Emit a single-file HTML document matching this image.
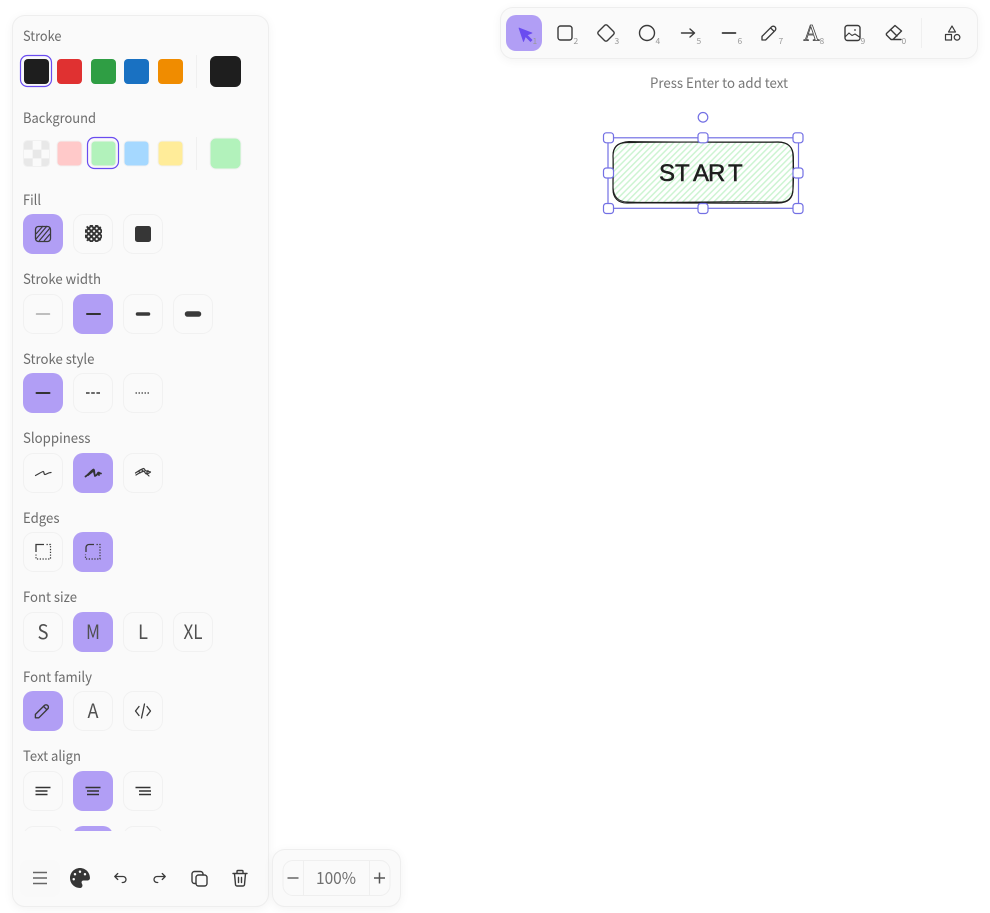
<!DOCTYPE html>
<html>
<head>
<meta charset="utf-8">
<style>
html,body{margin:0;padding:0;background:#fff;width:990px;height:913px;overflow:hidden}
.p{position:absolute;box-sizing:border-box;background:#fafafa;border:1px solid #eee;box-shadow:0 2px 10px rgba(0,0,0,.05)}
svg{position:absolute;left:0;top:0}
text{font-family:"Noto Sans CJK JP","Liberation Sans",sans-serif}
.l{font-size:14px;fill:#6c6c6c}
.b{fill:#fafafa;stroke:#f1f1f1;stroke-width:1}
.a{fill:#b19ef5}
.s{fill:none;stroke:#3a3a3a;stroke-width:1.4;stroke-linecap:round;stroke-linejoin:round}
.n{font-size:8.5px;fill:#999}
.f{font-size:20px;fill:#505050;text-anchor:middle}
.sw{stroke:#f1f1f1;stroke-width:1}
.h{fill:#fff;stroke:#7370e4;stroke-width:1.2}
</style>
</head>
<body>
<div class="p" style="left:12px;top:15px;width:257px;height:892px;border-radius:13px"></div>
<div class="p" style="left:272px;top:849px;width:129px;height:58px;border-radius:13px"></div>
<div class="p" style="left:500px;top:7px;width:478px;height:52px;border-radius:13px"></div>
<svg width="990" height="913" viewBox="0 0 990 913" xmlns="http://www.w3.org/2000/svg">
<defs>
<pattern id="hach" width="4.4" height="4.4" patternUnits="userSpaceOnUse" patternTransform="rotate(-45)">
<rect width="4.4" height="4.4" fill="#fff"/><rect width="4.4" height="1.5" fill="#cdf4d2"/>
</pattern>
<pattern id="chk" width="17.4" height="17.4" patternUnits="userSpaceOnUse" x="24" y="141">
<rect width="17.4" height="17.4" fill="#fafafa"/>
<rect width="8.7" height="8.7" fill="#e8e8e8"/><rect x="8.7" y="8.7" width="8.7" height="8.7" fill="#e8e8e8"/>
</pattern>
<pattern id="dots" width="3.8" height="3.8" patternUnits="userSpaceOnUse" patternTransform="rotate(45)">
<rect width="3.8" height="3.8" fill="#333"/><circle cx="1.9" cy="1.9" r="1.1" fill="#fafafa"/>
</pattern>
<clipPath id="clipRow"><rect x="13" y="800" width="255" height="31"/></clipPath>
</defs>

<!-- Stroke -->
<text class="l" x="23" y="41" textLength="38.500" lengthAdjust="spacingAndGlyphs">Stroke</text>
<rect x="20.500" y="55.500" width="31" height="31" rx="7" fill="none" stroke="#6a4cf0" stroke-width="1.200"/>
<rect x="24" y="59" width="25" height="25" rx="4" fill="#1e1e1e"/>
<rect x="57" y="59" width="25" height="25" rx="4" fill="#e03131"/>
<rect x="91" y="59" width="25" height="25" rx="4" fill="#2f9e44"/>
<rect x="124" y="59" width="25" height="25" rx="4" fill="#1971c2"/>
<rect x="158" y="59" width="25" height="25" rx="4" fill="#f08c00"/>
<rect x="196" y="55" width="1" height="33" fill="#f0f0f0"/>
<rect x="210" y="56" width="31" height="31" rx="6" fill="#1e1e1e"/>

<!-- Background -->
<text class="l" x="23" y="123" textLength="73" lengthAdjust="spacingAndGlyphs">Background</text>
<rect x="23.500" y="140.500" width="26" height="26" rx="4" fill="url(#chk)" stroke="#f1f1f1"/>
<rect x="57" y="141" width="25" height="25" rx="4" fill="#ffc9c9" class="sw"/>
<rect x="87.500" y="137.500" width="31" height="31" rx="7" fill="none" stroke="#6a4cf0" stroke-width="1.200"/>
<rect x="91" y="141" width="25" height="25" rx="4" fill="#b2f2bb" class="sw"/>
<rect x="124" y="141" width="25" height="25" rx="4" fill="#a5d8ff" class="sw"/>
<rect x="158" y="141" width="25" height="25" rx="4" fill="#ffec99" class="sw"/>
<rect x="196" y="137" width="1" height="33" fill="#f0f0f0"/>
<rect x="210" y="138" width="31" height="31" rx="6" fill="#b2f2bb" class="sw"/>

<!-- Fill -->
<text class="l" x="23" y="205" textLength="18" lengthAdjust="spacingAndGlyphs">Fill</text>
<rect class="a" x="23" y="214" width="40" height="40" rx="10"/>
<rect class="b" x="73.500" y="214.500" width="39" height="39" rx="10"/>
<rect class="b" x="123.500" y="214.500" width="39" height="39" rx="10"/>
<rect x="35.500" y="226.500" width="15" height="15" rx="3" fill="none" stroke="#3a3a3a" stroke-width="1.300"/>
<path d="M36 234l7-8M36 239l11-13M39 241l11-13M44 241l6-7" fill="none" stroke="#3a3a3a" stroke-width="1.200"/>
<rect x="85" y="225" width="17" height="17" rx="5" fill="url(#dots)"/>
<rect x="135" y="226" width="16" height="16" rx="2.500" fill="#363636"/>

<!-- Stroke width -->
<text class="l" x="23" y="284" textLength="78" lengthAdjust="spacingAndGlyphs">Stroke width</text>
<rect class="b" x="23.500" y="294.500" width="39" height="39" rx="10"/>
<rect class="a" x="73" y="294" width="40" height="40" rx="10"/>
<rect class="b" x="123.500" y="294.500" width="39" height="39" rx="10"/>
<rect class="b" x="173.500" y="294.500" width="39" height="39" rx="10"/>
<path d="M36.500 314h13" stroke="#aaa" stroke-width="1.500" stroke-linecap="round"/>
<path d="M87 314h13" stroke="#333" stroke-width="2" stroke-linecap="round"/>
<path d="M137.500 314h11" stroke="#3a3a3a" stroke-width="3.500" stroke-linecap="round"/>
<path d="M187.500 314h11" stroke="#3a3a3a" stroke-width="5.500" stroke-linecap="round"/>

<!-- Stroke style -->
<text class="l" x="23" y="364" textLength="71.500" lengthAdjust="spacingAndGlyphs">Stroke style</text>
<rect class="a" x="23" y="373" width="40" height="40" rx="10"/>
<rect class="b" x="73.500" y="373.500" width="39" height="39" rx="10"/>
<rect class="b" x="123.500" y="373.500" width="39" height="39" rx="10"/>
<path d="M36.500 393h13" stroke="#333" stroke-width="2" stroke-linecap="round"/>
<path d="M86 393h14" stroke="#3a3a3a" stroke-width="1.600" stroke-dasharray="3.600 1.600"/>
<path d="M135.500 393h15" stroke="#3a3a3a" stroke-width="1.300" stroke-dasharray="1.500 1.500"/>

<!-- Sloppiness -->
<text class="l" x="23" y="443" textLength="67.500" lengthAdjust="spacingAndGlyphs">Sloppiness</text>
<rect class="b" x="23.500" y="453.500" width="39" height="39" rx="10"/>
<rect class="a" x="73" y="453" width="40" height="40" rx="10"/>
<rect class="b" x="123.500" y="453.500" width="39" height="39" rx="10"/>
<path d="M35.500 475.500c3-1.500 5-3 7.500-4 1.500 0 .5 3 2 3s3-2 6-2" fill="none" stroke="#3a3a3a" stroke-width="1.200" stroke-linecap="round"/>
<path d="M85.500 476.500c3-2 5-5 8-7 1.500 0 0 6 2 6s2-3 3-3 1 1 2.500 1M88 475l5-4M94 472l1 4M98 473l1 2" fill="none" stroke="#333" stroke-width="1.800" stroke-linecap="round"/>
<path d="M135.500 473c3-2 5-3.500 8-4.500 1.500 0 1 2.500 3 2.500l4 1M136 475c3-2 5-3 8-4 1 1 1 3 3 3l3-1.500M147 474l2 2M139 471.500l1 1.500M142 470l1 1.500M148 470.500l-1.500 3" fill="none" stroke="#3a3a3a" stroke-width="1.200" stroke-linecap="round"/>

<!-- Edges -->
<text class="l" x="23" y="523" textLength="36.500" lengthAdjust="spacingAndGlyphs">Edges</text>
<rect class="b" x="23.500" y="532.500" width="39" height="39" rx="10"/>
<rect class="a" x="73" y="532" width="40" height="40" rx="10"/>
<path d="M36 552v-7.500h8" fill="none" stroke="#3a3a3a" stroke-width="1.300"/>
<path d="M46.500 544.500h4v14.500h-14.500v-4.500" fill="none" stroke="#3a3a3a" stroke-width="1.200" stroke-dasharray="1.300 1.500"/>
<path d="M86 552v-4.500a3 3 0 0 1 3-3h5" fill="none" stroke="#3a3a3a" stroke-width="1.300"/>
<path d="M96.500 544.500h3.500v14.500h-14.500v-4.500" fill="none" stroke="#3a3a3a" stroke-width="1.200" stroke-dasharray="1.300 1.500"/>

<!-- Font size -->
<text class="l" x="23" y="602" textLength="54" lengthAdjust="spacingAndGlyphs">Font size</text>
<rect class="b" x="23.500" y="612.500" width="39" height="39" rx="10"/>
<rect class="a" x="73" y="612" width="40" height="40" rx="10"/>
<rect class="b" x="123.500" y="612.500" width="39" height="39" rx="10"/>
<rect class="b" x="173.500" y="612.500" width="39" height="39" rx="10"/>
<text class="f" x="43" y="639" textLength="11" lengthAdjust="spacingAndGlyphs">S</text>
<text class="f" x="93" y="639" textLength="14" lengthAdjust="spacingAndGlyphs">M</text>
<text class="f" x="143" y="639" textLength="10" lengthAdjust="spacingAndGlyphs">L</text>
<text class="f" x="193" y="639" textLength="19" lengthAdjust="spacingAndGlyphs">XL</text>

<!-- Font family -->
<text class="l" x="23" y="682" textLength="69" lengthAdjust="spacingAndGlyphs">Font family</text>
<rect class="a" x="23" y="691" width="40" height="40" rx="10"/>
<rect class="b" x="73.500" y="691.500" width="39" height="39" rx="10"/>
<rect class="b" x="123.500" y="691.500" width="39" height="39" rx="10"/>
<g transform="translate(32 700.800) scale(.85)"><path class="s" d="M4 20h4l10.500-10.500a2.828 2.828 0 1 0-4-4L4 16v4M13.500 6.500l4 4" style="stroke-width:1.600"/></g>
<text class="f" x="93" y="718" textLength="11" lengthAdjust="spacingAndGlyphs">A</text>
<path class="s" d="M139 706.500l-3.500 4.500 3.500 4.500M147 706.500l3.500 4.500-3.500 4.500M144.500 704l-3 14" style="stroke-width:1.300"/>

<!-- Text align -->
<text class="l" x="23" y="761" textLength="58" lengthAdjust="spacingAndGlyphs">Text align</text>
<rect class="b" x="23.500" y="771.500" width="39" height="39" rx="10"/>
<rect class="a" x="73" y="771" width="40" height="40" rx="10"/>
<rect class="b" x="123.500" y="771.500" width="39" height="39" rx="10"/>
<path d="M35.500 787.500h15M35.500 791h12M35.500 794.500h12" stroke="#333" stroke-width="1.500" fill="none"/>
<path d="M85.500 787.500h15M87 791h12M87 794.500h12" stroke="#333" stroke-width="1.500" fill="none"/>
<path d="M135.500 787.500h15M139 791h12M139 794.500h12" stroke="#333" stroke-width="1.500" fill="none"/>
<g clip-path="url(#clipRow)">
<rect class="b" x="23.500" y="826.500" width="39" height="39" rx="10"/>
<rect class="a" x="73" y="826" width="40" height="40" rx="10"/>
<rect class="b" x="123.500" y="826.500" width="39" height="39" rx="10"/>
</g>

<!-- Bottom bar -->
<rect x="20" y="860" width="40" height="37" rx="8" fill="#f9f9f9"/>
<path d="M33 872.500h14M33 878h14M33 883.500h14" stroke="#666" stroke-width="1.500" fill="none"/>
<g transform="translate(70 868) scale(.039)"><path fill="#363636" d="M512 256c0 .9 0 1.800 0 2.700c-.4 36.500-33.600 61.300-70.100 61.300H344c-26.500 0-48 21.500-48 48c0 3.400 .4 6.700 1 9.900c2.100 10.200 6.500 20 10.800 29.900c6.100 13.800 12.100 27.500 12.100 42c0 31.800-21.600 60.700-53.400 62c-3.500 .1-7 .2-10.600 .2C114.600 512 0 397.400 0 256S114.600 0 256 0S512 114.600 512 256zM128 288a32 32 0 1 0 -64 0 32 32 0 1 0 64 0zm0-96a32 32 0 1 0 0-64 32 32 0 1 0 0 64zM288 96a32 32 0 1 0 -64 0 32 32 0 1 0 64 0zm96 96a32 32 0 1 0 0-64 32 32 0 1 0 0 64z"/></g>
<g transform="translate(111 869) scale(.75)"><path class="s" style="stroke-width:1.700" d="M9 14l-4-4 4-4M5 10h11a4 4 0 1 1 0 8h-1"/></g>
<g transform="translate(151 869) scale(.75)"><path class="s" style="stroke-width:1.700" d="M15 14l4-4-4-4M19 10H8a4 4 0 1 0 0 8h1"/></g>
<path class="s" d="M196 883.500h-1.500a2.500 2.500 0 0 1-2.500-2.500v-7a2.500 2.500 0 0 1 2.500-2.500h6a2.500 2.500 0 0 1 2.500 2.500v1"/>
<rect class="s" x="196" y="875" width="11" height="11" rx="2.500"/>
<path class="s" d="M233 873.500h14M237 873.500v-2a1 1 0 0 1 1-1h4a1 1 0 0 1 1 1v2M234.500 873.500l1 11a1.500 1.500 0 0 0 1.500 1.500h6a1.500 1.500 0 0 0 1.500-1.500l1-11M238.500 877.500v5M241.500 877.500v5"/>

<!-- Zoom -->
<rect x="283" y="860.500" width="107" height="35" rx="10" fill="#fafafa" stroke="#efefef"/>
<path d="M303.500 861v34M369.500 861v34" stroke="#efefef"/>
<path d="M287.500 878h11" stroke="#666" stroke-width="1.500"/>
<path d="M374 878h11M379.500 872.500v11" stroke="#555" stroke-width="1.500"/>
<text x="316" y="884" font-size="16.500" fill="#707070" textLength="40" lengthAdjust="spacingAndGlyphs">100%</text>

<!-- Toolbar -->
<rect class="a" x="506" y="15" width="36" height="36" rx="10"/>
<path d="M519 28l13 5-5 2 5 5-1.500 1.500-5-5-2 5z" fill="#6a4cf0" stroke="#6a4cf0" stroke-width=".8" stroke-linejoin="round"/>
<rect class="s" x="558" y="26" width="14" height="14" rx="2.500"/>
<path class="s" d="M604.500 25.500a2 2 0 0 1 3 0l6 6a2 2 0 0 1 0 3l-6 6a2 2 0 0 1-3 0l-6-6a2 2 0 0 1 0-3z"/>
<circle class="s" cx="647" cy="33" r="7.500"/>
<path class="s" d="M681.500 33h13M690 29l4.500 4-4.500 4"/>
<path d="M722.500 33h13" stroke="#3a3a3a" stroke-width="1.700" stroke-linecap="round"/>
<g transform="translate(758.400 22) scale(.9)"><path class="s" style="stroke-width:1.500" d="M4 20h4l10.500-10.500a2.828 2.828 0 1 0-4-4L4 16v4M13.500 6.500l4 4"/></g>
<text x="803.500" y="40.500" font-size="23" fill="#fafafa" stroke="#3a3a3a" stroke-width=".8" textLength="16" lengthAdjust="spacingAndGlyphs" style='font-family:"Liberation Serif",serif'>A</text>
<rect class="s" x="845" y="25.500" width="15" height="15" rx="2.500"/>
<path class="s" d="M845 37l4-4 3 2.500 3-1.500 4.500 3" style="stroke-width:1.100"/>
<circle cx="855" cy="30" r=".9" fill="#3a3a3a"/>
<path class="s" d="M895 25.500l6.500 5.500-8.500 8.500h-2l-4.500-4.500q-.5-1.500 .5-2zM890.500 29.500l6.500 6.500M893 39.500h8"/>
<path class="s" style="stroke-width:1.200" d="M952 26l3.500 6h-7zM945.500 34.500h6v5.500h-6zM957 34.500a2.800 2.800 0 1 0 .1 0z"/>
<rect x="921" y="18" width="1" height="30" fill="#efefef"/>
<text class="n" x="532.500" y="44">1</text>
<text class="n" x="573.500" y="44">2</text>
<text class="n" x="614.500" y="44">3</text>
<text class="n" x="655.500" y="44">4</text>
<text class="n" x="696.500" y="44">5</text>
<text class="n" x="737.500" y="44">6</text>
<text class="n" x="778.500" y="44">7</text>
<text class="n" x="819.500" y="44">8</text>
<text class="n" x="860.500" y="44">9</text>
<text class="n" x="901.500" y="44">0</text>

<text x="650" y="88" font-size="14" fill="#777" textLength="138" lengthAdjust="spacingAndGlyphs">Press Enter to add text</text>

<!-- Canvas element -->
<rect x="613" y="142" width="180" height="61" rx="14" fill="url(#hach)"/>
<path d="M627 142.500c50-1 110 0 151-.5 10 0 15 5 15 14 .5 12 0 22 0 33 0 10-6 14-15 14-48 .500-102-.5-151 0-9 0-14-5-14-14 0-11 .5-22 0-33 0-9 5-13.500 14-13.500z" fill="none" stroke="#1e1e1e" stroke-width="1.200"/>
<path d="M629 141.500c48 .5 105 1 149 .5 11 .5 15.500 6 15.500 15 0 10 .5 23-.5 33-1 8-6 13-16 12-50-1.500-100 1.500-149 0-10 0-14.500-6-15-15-.5-11 .5-24 0-32 0-8 6-13 16-13.500z" fill="none" stroke="#1e1e1e" stroke-width=".9"/>
<text y="181" x="659 675 693 708 728" font-size="24" fill="#1e1e1e" stroke="#1e1e1e" stroke-width=".5" style='font-family:"Liberation Sans",sans-serif'>START</text>

<rect x="608" y="137.800" width="190.500" height="70.500" fill="none" stroke="#7370e4" stroke-width="1.200"/>
<circle class="h" cx="703" cy="117.300" r="4.800"/>
<rect class="h" x="603.500" y="132.800" width="10" height="10" rx="2.800"/>
<rect class="h" x="698" y="132.800" width="10" height="10" rx="2.800"/>
<rect class="h" x="793" y="132.800" width="10" height="10" rx="2.800"/>
<rect class="h" x="603.500" y="168" width="10" height="10" rx="2.800"/>
<rect class="h" x="793" y="168" width="10" height="10" rx="2.800"/>
<rect class="h" x="603.500" y="203.500" width="10" height="10" rx="2.800"/>
<rect class="h" x="698" y="203.500" width="10" height="10" rx="2.800"/>
<rect class="h" x="793" y="203.500" width="10" height="10" rx="2.800"/>
</svg>
</body>
</html>
